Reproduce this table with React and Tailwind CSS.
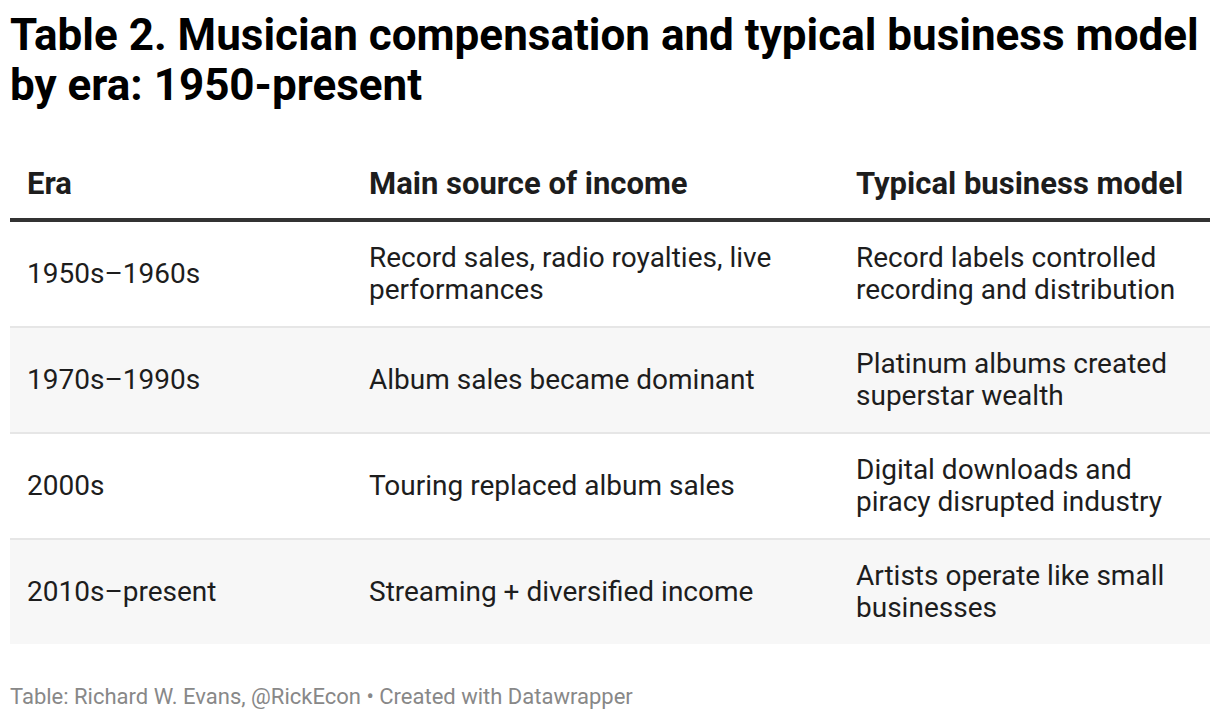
import React from "react";

const rows = [
  {
    era: "1950s–1960s",
    income: "Record sales, radio royalties, live performances",
    model: "Record labels controlled recording and distribution",
  },
  {
    era: "1970s–1990s",
    income: "Album sales became dominant",
    model: "Platinum albums created superstar wealth",
  },
  {
    era: "2000s",
    income: "Touring replaced album sales",
    model: "Digital downloads and piracy disrupted industry",
  },
  {
    era: "2010s–present",
    income: "Streaming + diversified income",
    model: "Artists operate like small businesses",
  },
];

export default function App() {
  return (
    <div className="w-[1220px] h-[720px] bg-white px-[10px] pt-[10px] font-['Roboto',sans-serif] overflow-hidden">
      <h1 className="text-[44px] leading-[50px] font-bold text-[#000] whitespace-nowrap">
        Table 2. Musician compensation and typical business model
        <br />
        by era: 1950-present
      </h1>

      <table className="mt-[58px] w-[1200px] table-fixed border-collapse">
        <colgroup>
          <col className="w-[342px]" />
          <col className="w-[487px]" />
          <col className="w-[371px]" />
        </colgroup>
        <thead>
          <tr className="border-b-[4px] border-[#333]">
            <th className="text-left align-bottom px-[17px] pb-[18px] text-[31px] leading-[32px] font-bold text-[#1d1d1d]">Era</th>
            <th className="text-left align-bottom px-[17px] pb-[18px] text-[31px] leading-[32px] font-bold text-[#1d1d1d]">Main source of income</th>
            <th className="text-left align-bottom px-[17px] pb-[18px] text-[31px] leading-[32px] font-bold text-[#1d1d1d]">Typical business model</th>
          </tr>
        </thead>
        <tbody>
          {rows.map((r, i) => (
            <tr
              key={r.era}
              className={`${i % 2 === 1 ? "bg-[#f7f7f7]" : "bg-white"} ${i < rows.length - 1 ? "border-b-2 border-[#e6e6e6]" : ""}`}
            >
              <td className="px-[17px] py-[20px] text-[28px] leading-[32px] text-[#1d1d1d] align-middle">{r.era}</td>
              <td className="px-[17px] py-[20px] text-[28px] leading-[32px] text-[#1d1d1d] align-middle">{r.income}</td>
              <td className="px-[17px] py-[20px] text-[28px] leading-[32px] text-[#1d1d1d] align-middle">{r.model}</td>
            </tr>
          ))}
        </tbody>
      </table>

      <p className="mt-[41px] text-[22px] leading-[24px] text-[#888]">
        Table: Richard W. Evans, @RickEcon • Created with Datawrapper
      </p>
    </div>
  );
}
